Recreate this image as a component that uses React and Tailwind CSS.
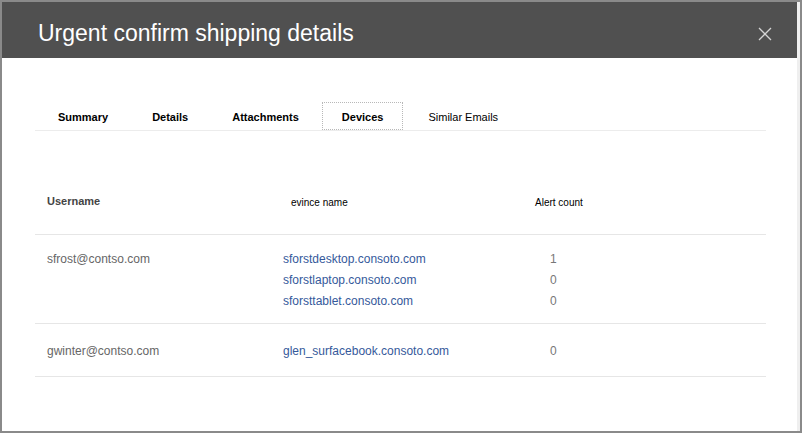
import React from "react";

const tabs = ["Summary", "Details", "Attachments", "Devices", "Similar Emails"];

const rows = [
  {
    user: "sfrost@contso.com",
    devices: [
      { name: "sforstdesktop.consoto.com", count: 1 },
      { name: "sforstlaptop.consoto.com", count: 0 },
      { name: "sforsttablet.consoto.com", count: 0 },
    ],
  },
  {
    user: "gwinter@contso.com",
    devices: [{ name: "glen_surfacebook.consoto.com", count: 0 }],
  },
];

const App = () => {
  return (
    <div
      className="w-[802px] h-[433px] border-2 border-[#8a8a8a] bg-white flex overflow-hidden"
      style={{ fontFamily: '"Liberation Sans", Arial, sans-serif' }}
    >
      <div className="flex-1 flex flex-col">
        {/* Header */}
        <div className="h-[56px] bg-[#505050] flex items-center justify-between pl-[36px] pr-[25px]">
          <h1 className="text-white text-[23px] leading-none pt-[6px]">
            Urgent confirm shipping details
          </h1>
          <button className="w-[14px] h-[14px] mt-[7px] text-[#d4d4d4]">
            <svg viewBox="0 0 14 14" width="14" height="14">
              <path
                d="M1 1 L13 13 M13 1 L1 13"
                stroke="currentColor"
                strokeWidth="1.3"
                fill="none"
              />
            </svg>
          </button>
        </div>

        {/* Body */}
        <div className="pl-[33px] pr-[31px] pt-[44px]">
          {/* Tabs */}
          <div className="flex border-b border-[#ececec] h-[29px] pl-px">
            {tabs.map((tab) => {
              const active = tab === "Devices";
              return (
                <div
                  key={tab}
                  className={`h-[28px] flex items-center pt-[2px] text-[11px] text-black ${
                    tab === "Similar Emails" ? "font-normal ml-[5px] px-[20px]" : "font-bold"
                  } ${
                    active
                      ? "border border-dotted border-[#b8b8b8] ml-[1px] px-[19px]"
                      : "mx-[2px] px-[20px]"
                  }`}
                >
                  {tab}
                </div>
              );
            })}
          </div>

          {/* Table header */}
          <div className="flex h-[104px] pt-[63px] pl-[12px] border-b border-[#e6e6e6]">
            <div className="w-[244px] text-[11px] font-bold text-[#444] leading-[14px]">
              Username
            </div>
            <div className="w-[244px] text-[10px] text-black leading-[14px] mt-[2px]">
              evince name
            </div>
            <div className="text-[10px] text-black leading-[14px] mt-[2px]">
              Alert count
            </div>
          </div>

          {/* Rows */}
          {rows.map((row, i) => (
            <div
              key={row.user}
              className={`flex pl-[12px] border-b border-[#e6e6e6] text-[12px] leading-[21px] ${
                i === 0 ? "pt-[14px] pb-[11px]" : "pt-[17px] pb-[14px]"
              }`}
            >
              <div className="w-[236px] text-[#666]">{row.user}</div>
              <div className="w-[267px] flex flex-col">
                {row.devices.map((d) => (
                  <a key={d.name} className="text-[#35599b]">
                    {d.name}
                  </a>
                ))}
              </div>
              <div className="flex flex-col text-[#777]">
                {row.devices.map((d) => (
                  <span key={d.name}>{d.count}</span>
                ))}
              </div>
            </div>
          ))}
        </div>
      </div>
      <div className="w-[3px] bg-[#efefef]" />
    </div>
  );
};

export default App;
